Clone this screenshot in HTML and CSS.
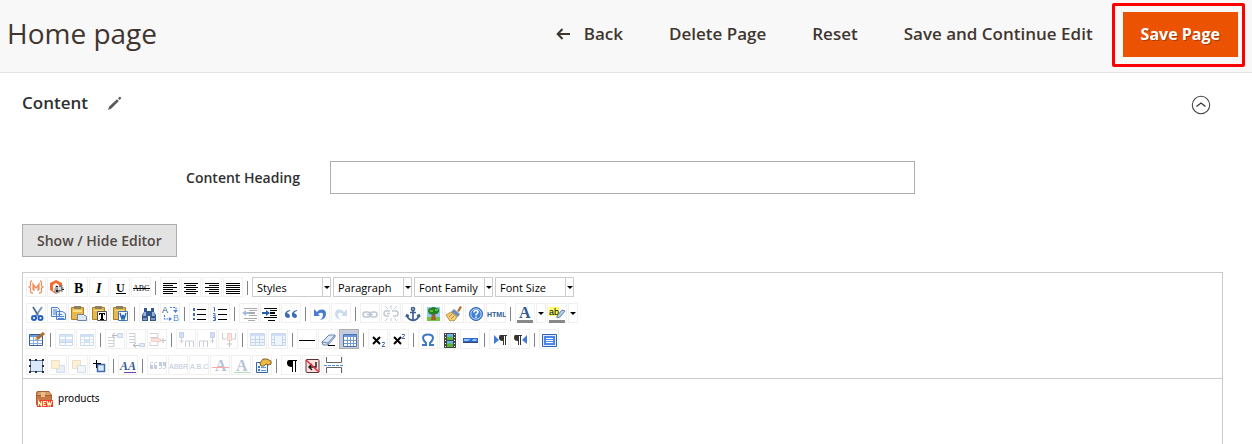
FILE: index.html
```html
<!DOCTYPE html>
<html lang="en">
<head>
<meta charset="utf-8">
<title>Home page</title>
<link rel="stylesheet" href="styles.css">
</head>
<body>
<header class="page-header">
  <h1 class="page-title">Home page</h1>
  <div class="page-actions">
    <button class="action back" type="button"><svg class="back-icon" viewBox="0 0 14 12" aria-hidden="true"><path d="M6.5 1 1.7 6l4.8 5M2 6h12" fill="none" stroke="#41362f" stroke-width="2"/></svg>Back</button>
    <button class="action" type="button">Delete Page</button>
    <button class="action" type="button">Reset</button>
    <button class="action" type="button">Save and Continue Edit</button>
    <div class="highlight"><button class="primary" type="button">Save Page</button></div>
  </div>
</header>
<main class="page-main">
  <div class="section-head">
    <h2 class="section-title">Content</h2>
    <svg class="pencil" viewBox="0 0 14 14" aria-hidden="true"><path d="m0 14 1.200-3.500L9 3.200l1.900 1.900-7.500 7.500zM10 2.300l1.400-1.400c.4-.3.8-.2 1.300.4s.7.900.3 1.300l-1.300 1.400z" fill="#5a5a55"/></svg>
    <button class="collapse" type="button" aria-label="Collapse section"><svg viewBox="0 0 20 20"><circle cx="10" cy="10" r="8.700" fill="none" stroke="#41464c" stroke-width="1.100"/><path d="m5.500 11.500 4.500-3.500 4.500 3.500" fill="none" stroke="#303030" stroke-width="1.200"/></svg></button>
  </div>
  <div class="field">
    <label class="field-label" for="heading">Content Heading</label>
    <input class="field-input" id="heading" type="text">
  </div>
  <button class="toggle-editor" type="button">Show / Hide Editor</button>

  <section class="editor">
    <div class="toolbars">
      <div class="toolbar">
        <button class="tool" aria-label="Insert variable"><svg viewBox="0 0 20 20"><g fill="none" stroke="#ee9260" stroke-width="1.300"><path d="M6 4Q4 4 4.500 7T2.500 10q2.500 0 2 3T7 16M14 4q2 0 1.500 3t2 3q-2.500 0-2 3T13 16M7 13V7l3 4 3-4v6M8 14V9M12 14V9"/></g></svg></button>
        <button class="tool" aria-label="Insert widget"><svg viewBox="0 0 20 20"><path d="m9 3 6 3v7l-6 4-6-4V6z" fill="#f36d32"/><path d="m6 8 3-2 3 2v6H6z" fill="#fff"/><path d="m9 8 4 3-1 5-3 1-2-4z" fill="#aaa"/><path d="m13 7 1 2 2-1-1 2 2 1-2 1 1 3-3-1-1 2-1-3-2-1 3-1z" fill="#777"/><path d="M11 10h3v3h-3z" fill="#ddd"/><path d="M9 9h2v1H9zM9 13h2v2H9zM15 12h2v1h-2z" fill="#222"/></svg></button>
        <button class="tool" aria-label="Bold"><svg viewBox="0 0 20 20"><text x="6" y="16" class="serif bold t14">B</text></svg></button>
        <button class="tool" aria-label="Italic"><svg viewBox="0 0 20 20"><text x="7" y="16" class="serif bold italic t14">I</text></svg></button>
        <button class="tool" aria-label="Underline"><svg viewBox="0 0 20 20"><text x="6" y="15" class="serif bold t12">U</text><path d="M6 16h10v1H6z"/></svg></button>
        <button class="tool" aria-label="Strikethrough"><svg viewBox="0 0 20 20"><text x="2" y="14" class="serif t8">ABC</text><path d="M2 11h17v1H2z"/></svg></button>
        <span class="sep"></span>
        <button class="tool" aria-label="Align left"><svg viewBox="0 0 20 20"><path d="M3 6h14v1H3zM3 8h10v1H3zM3 10h14v1H3zM3 12h10v1H3zM3 14h14v1H3zM3 16h10v1H3z"/></svg></button>
        <button class="tool" aria-label="Align center"><svg viewBox="0 0 20 20"><path d="M3 6h14v1H3zM5 8h10v1H5zM3 10h14v1H3zM5 12h10v1H5zM3 14h14v1H3zM5 16h10v1H5z"/></svg></button>
        <button class="tool" aria-label="Align right"><svg viewBox="0 0 20 20"><path d="M3 6h14v1H3zM7 8h10v1H7zM3 10h14v1H3zM7 12h10v1H7zM3 14h14v1H3zM7 16h10v1H7z"/></svg></button>
        <button class="tool" aria-label="Justify"><svg viewBox="0 0 20 20"><path d="M3 6h14v1H3zM3 8h14v1H3zM3 10h14v1H3zM3 12h14v1H3zM3 14h14v1H3zM3 16h14v1H3z"/></svg></button>
        <span class="sep"></span>
        <div class="lists">
          <span class="list"><select aria-label="Styles"><option>Styles</option></select></span>
          <span class="list"><select aria-label="Format"><option>Paragraph</option></select></span>
          <span class="list"><select aria-label="Font family"><option>Font Family</option></select></span>
          <span class="list"><select aria-label="Font size"><option>Font Size</option></select></span>
        </div>
      </div>

      <div class="toolbar">
        <button class="tool" aria-label="Cut"><svg viewBox="0 0 20 20"><path d="m7 4 6 10M16 4 9 14" fill="none" stroke="#7d97b8" stroke-width="2"/><path d="m7 4 5 8" stroke="#345a8c"/><g fill="none" stroke="#2460bd" stroke-width="2"><circle cx="8" cy="15" r="2"/><circle cx="14.500" cy="15" r="2"/></g></svg></button>
        <button class="tool" aria-label="Copy"><svg viewBox="0 0 20 20"><path d="M4.500 4.500h6l2 2v7h-8zM9.500 8.500h6l3 2v6h-9z" fill="#e6f0ff" stroke="#5080cc"/><path d="M6 7h4M6 9h3M6 11h3M11 11.500h4M11 13.500h6M11 15.500h6" stroke="#4f82d2"/></svg></button>
        <button class="tool" aria-label="Paste"><svg viewBox="0 0 20 20"><path d="M3.500 4.500h12v12h-12z" fill="#e8b84c" stroke="#ad7e28"/><path d="M6 3h7v3H6z" fill="#8a8063"/><path d="M5 7h9v2H5z" fill="#f9df86"/><path d="M9.500 11.500h6l3 2v4h-9z" fill="#dce7f7" stroke="#6d83a5"/></svg></button>
        <button class="tool" aria-label="Paste as text"><svg viewBox="0 0 20 20"><path d="M3.500 4.500h12v12h-12z" fill="#e8b84c" stroke="#ad7e28"/><path d="M6 3h7v3H6z" fill="#8a8063"/><path d="M5 7h9v1H5z" fill="#f9df86"/><path d="M8.500 8.500h9v9h-9z" fill="#fff" stroke="#555"/><path d="M10 10h6v2h-1v-1h-1v5h1v1h-4v-1h1v-5h-1v1h-1z"/></svg></button>
        <button class="tool" aria-label="Paste from Word"><svg viewBox="0 0 20 20"><path d="M3.500 4.500h12v12h-12z" fill="#e8b84c" stroke="#ad7e28"/><path d="M6 3h7v3H6z" fill="#8a8063"/><path d="M5 7h9v1H5z" fill="#f9df86"/><path d="M8.500 8.500h9v9h-9z" fill="#fff" stroke="#4774b7"/><path d="m10 10 2 6 1-4 1 4 2-6" fill="none" stroke="#2468b3" stroke-width="1.500"/></svg></button>
        <span class="sep"></span>
        <button class="tool" aria-label="Find"><svg viewBox="0 0 20 20"><path d="M5 5h3v3h4V5h3v4l2 3v6h-6v-5H9v5H3v-6l2-3z" fill="#34598d"/><path d="M5 9h2v4H4zM13 9h2l1 4h-3z" fill="#91b5df"/><path d="M4 16h4M12 16h4" stroke="#c7dcf4"/></svg></button>
        <button class="tool" aria-label="Find and replace"><svg viewBox="0 0 20 20"><text x="2" y="10" class="sans t9 navy">A</text><text x="13" y="18" class="sans t9 sky">B</text><path d="M10 4.500h6v3M4.500 12v4h6" fill="none" stroke="#4d7ee0" stroke-width="1.200" stroke-dasharray="2 1"/><path d="M13 7h5l-2.500 3zM9 14v4l3-2z" fill="#4d7ee0"/></svg></button>
        <span class="sep"></span>
        <button class="tool" aria-label="Bulleted list"><svg viewBox="0 0 20 20"><path d="M8 6h9v1H8zM8 11h9v1H8zM8 16h9v1H8z"/><path d="M4 5h2v3H4zM4 10h2v3H4zM4 15h2v2H4z" fill="#426bb0"/></svg></button>
        <button class="tool" aria-label="Numbered list"><svg viewBox="0 0 20 20"><path d="M8 6h9v1H8zM8 11h9v1H8zM8 16h9v1H8z"/><path d="M3.500 4.500h1v4M3 10.500h2v1l-1.500 1.500H6M3 14.500h2.500v3H3M4 16h1" fill="none" stroke="#426bb0"/></svg></button>
        <span class="sep"></span>
        <button class="tool" aria-label="Outdent"><svg viewBox="0 0 20 20"><path d="M5 5h13v1H5zM10 7h8v1h-8zM10 9h6v2h-6zM10 12h8v1h-8zM5 15h13v1H5zM9 17h7v1H9z" fill="#aaa"/><path d="m3 10 4-3v2h3v2H7v2z" fill="#a5bddd"/></svg></button>
        <button class="tool" aria-label="Indent"><svg viewBox="0 0 20 20"><path d="M4 5h13v1H4zM10 7h7v1h-7zM10 9h5v2h-5zM10 12h7v1h-7zM4 14h13v1H4zM8 17h7v1H8z"/><path d="m10 10-4-3v2H2v2h4v2z" fill="#225fae"/></svg></button>
        <button class="tool" aria-label="Blockquote"><svg viewBox="0 0 20 20"><path d="M9 7Q3 8 4 13q1 2 3 2t2-2-3-3q0-1 3-2zM16 7q-6 1-5 6 1 2 3 2t2-2-3-3q0-1 3-2z" fill="#3e6cb1"/></svg></button>
        <span class="sep"></span>
        <button class="tool" aria-label="Undo"><svg viewBox="0 0 20 20"><path d="M4 6v7h6L8 11q5-3 5 1 0 3-3 5 6-1 6-6 0-6-7-4L7 9z" fill="#477bd0"/></svg></button>
        <button class="tool" aria-label="Redo"><svg viewBox="0 0 20 20"><path d="M16 6v7h-6l2-2q-5-3-5 1 0 3 3 5-6-1-6-6 0-6 7-4l2 2z" fill="#cddcec"/></svg></button>
        <span class="sep"></span>
        <button class="tool" aria-label="Insert link"><svg viewBox="0 0 20 20"><g fill="none" stroke="#bdc6d3" stroke-width="1.500"><rect x="3" y="9" width="7" height="5" rx="2.500"/><rect x="10" y="9" width="7" height="5" rx="2.500"/><path d="M7 11.500h6"/></g></svg></button>
        <button class="tool" aria-label="Remove link"><svg viewBox="0 0 20 20"><g fill="none" stroke="#c2cad5" stroke-width="1.500"><path d="M9 8H5q-2 0-2 2.500T5 13h3M11 8h4q2 0 2 2.500T15 13h-3M6 10.500h3"/><path d="m4 3 3 3M10 2v4M16 3l-3 3M4 18l3-3M10 18v-3M16 18l-3-3" stroke-width="1"/></g></svg></button>
        <button class="tool" aria-label="Anchor"><svg viewBox="0 0 20 20"><g fill="none" stroke="#3f608b" stroke-width="1.700"><circle cx="11" cy="6" r="1.500"/><path d="M11 8v9M8 9.500h6M5 12q1 5 6 5.500 5-.5 6-5.500M4 14l1-2 2 1M18 14l-1-2-2 1"/></g></svg></button>
        <button class="tool" aria-label="Insert image"><svg viewBox="0 0 20 20"><path d="M4 4h13v14H4z" fill="#8fc9f5"/><path d="M4 14h13v4H4z" fill="#72c342"/><path d="M9 10h3l1 7H8z" fill="#a2602b"/><path d="M5 8q0-3 3-3 3-2 5 0 4 0 3 4-2 3-5 2-5 2-6-3z" fill="#218225"/><path d="M7 7h3v2H7zM12 6h3v2h-3z" fill="#67ba36"/></svg></button>
        <button class="tool" aria-label="Clean up code"><svg viewBox="0 0 20 20"><path d="m13 8 3-5 2 1-3 5z" fill="#b57431"/><path d="m10 6 6 5-2 3-7-5z" fill="#718cb5"/><path d="m7 9 6 5-3 4q-3-1-4 0l-4-6z" fill="#f4cf72" stroke="#b99345"/><path d="m8 11-3 3M10 13l-3 3" stroke="#b88f43"/></svg></button>
        <button class="tool" aria-label="Help"><svg viewBox="0 0 20 20"><circle cx="11" cy="11" r="6.500" fill="#3f7fd6" stroke="#2c66ba"/><circle cx="11" cy="11" r="5.200" fill="none" stroke="#dcecff" stroke-width=".8"/><path d="M9 9.500q0-2 2-2t2 1.500-2 2.500v1M11 13.500V15" fill="none" stroke="#fff" stroke-width="1.500"/></svg></button>
        <button class="tool" aria-label="Edit HTML source"><svg viewBox="0 0 20 20"><text x="1" y="14" class="sans bold t7 navy">HTML</text></svg></button>
        <span class="sep"></span>
        <button class="tool" aria-label="Text color"><svg viewBox="0 0 20 20"><text x="4" y="15" class="serif bold t16 navy">A</text><path d="M2 17h16v3H2z" fill="#888"/></svg></button>
        <button class="drop" aria-label="Choose text color"></button>
        <button class="tool" aria-label="Background color"><svg viewBox="0 0 20 20"><path d="M2 4h10v9H2z" fill="#ff6"/><text x="2" y="12" class="sans t9">ab</text><path d="m10 13 5-6 3 1-5 6-3 1z" fill="#b4cfe9" stroke="#63819e"/><path d="M2 17h16v3H2z" fill="#888"/></svg></button>
        <button class="drop" aria-label="Choose background color"></button>
      </div>

      <div class="toolbar">
        <button class="tool" aria-label="Table properties"><svg viewBox="0 0 20 20"><path d="M3.500 5.500h13v11h-13z" fill="#fff" stroke="#385f91"/><path d="M4 6h12v2H4z" fill="#699de3"/><path d="M4 11.500h12M4 14.500h12M7.500 8v8M11.500 8v8" stroke="#8aaede"/><path d="m9 11 1-3 7-5 2 2-7 6z" fill="#a96d36"/><path d="m9 11 1-3 2 2z" fill="#e7c894"/></svg></button>
        <span class="sep"></span>
        <button class="tool faded" aria-label="Row properties"><svg viewBox="0 0 20 20"><path d="M4.500 5.500h13v11h-13z" fill="#fff" stroke="#6f96cc"/><path d="M5 6h12v2H5zM5 10h12v3H5z" fill="#8fb6ed"/><path d="M10.500 6v10M5 13.500h12" stroke="#628dc9"/></svg></button>
        <button class="tool faded" aria-label="Cell properties"><svg viewBox="0 0 20 20"><path d="M4.500 5.500h13v11h-13z" fill="#fff" stroke="#6f96cc"/><path d="M5 6h12v2H5zM9 10h5v3H9z" fill="#7ca9e9"/><path d="M8.500 8v8M13.500 8v8M5 10.500h12M5 13.500h12" stroke="#8eb0df"/></svg></button>
        <span class="sep"></span>
        <button class="tool faded" aria-label="Insert row before"><svg viewBox="0 0 20 20"><path d="M3 8.500h6v9H3M3 11.500h6M3 14.500h6" fill="none" stroke="#747c8c"/><path d="M12.500 4.500h5v4h-5z" fill="#a8c9f6" stroke="#648dcd"/><path d="M12 6.500H8M10 4 7 6.500 10 9" fill="none" stroke="#333"/></svg></button>
        <button class="tool faded" aria-label="Insert row after"><svg viewBox="0 0 20 20"><path d="M3 4.500h6v9H3M3 7.500h6M3 10.500h6" fill="none" stroke="#747c8c"/><path d="M13.500 14.500h5v3h-5z" fill="#a8c9f6" stroke="#648dcd"/><path d="M13 16.500H8M10 14l-3 2.500 3 2" fill="none" stroke="#333"/></svg></button>
        <button class="tool faded" aria-label="Delete row"><svg viewBox="0 0 20 20"><path d="M3 4.500h8v4H3M3 13v3.500h8V13" fill="none" stroke="#747c8c"/><path d="M4.500 9.500h9v3h-9z" fill="#f9aaa0" stroke="#df7167"/><path d="M14 11.500h5M16 9v5" stroke="#555"/></svg></button>
        <span class="sep"></span>
        <button class="tool faded" aria-label="Insert column before"><svg viewBox="0 0 20 20"><path d="M3.500 3.500h4v5h-4z" fill="#78a7ec" stroke="#557fba"/><path d="M5.500 9v5M3.500 12h4M9.500 18v-6h8v6M13.500 12v6" fill="none" stroke="#66758d"/></svg></button>
        <button class="tool faded" aria-label="Insert column after"><svg viewBox="0 0 20 20"><path d="M13.500 3.500h4v5h-4z" fill="#78a7ec" stroke="#557fba"/><path d="M15.500 9v5M13.500 12h4M2.500 18v-6h8v6M6.500 12v6" fill="none" stroke="#66758d"/></svg></button>
        <button class="tool faded" aria-label="Delete column"><svg viewBox="0 0 20 20"><path d="M4.500 4v6h4M17.500 4v6h-4" fill="none" stroke="#66758d"/><path d="M9.500 4.500h4v7h-4z" fill="#f9aaa0" stroke="#df7167"/><path d="M11.500 12v6M9 15h5" stroke="#555"/></svg></button>
        <span class="sep"></span>
        <button class="tool faded" aria-label="Split cells"><svg viewBox="0 0 20 20"><path d="M3.500 4.500h14v12h-14z" fill="#d4e3f7" stroke="#6d92c5"/><path d="M4 5h13v2H4z" fill="#79a6e7"/><path d="M4 10.500h13M4 13.500h13M8.500 7v9M12.500 7v9" stroke="#648dc6"/></svg></button>
        <button class="tool faded" aria-label="Merge cells"><svg viewBox="0 0 20 20"><path d="M3.500 4.500h14v12h-14z" fill="#d4e3f7" stroke="#6d92c5"/><path d="M4 5h13v2H4z" fill="#79a6e7"/><path d="M6.500 7v9M14.500 7v9M4 10.500h2M15 10.500h2M4 13.500h2M15 13.500h2" stroke="#648dc6"/></svg></button>
        <span class="sep"></span>
        <button class="tool" aria-label="Horizontal rule"><svg viewBox="0 0 20 20"><path d="M2 11h16v1H2z"/></svg></button>
        <button class="tool" aria-label="Remove formatting"><svg viewBox="0 0 20 20"><path d="m4 13 7-7h6v2l-7 8H5z" fill="#dce8fa" stroke="#6b86ad"/><path d="m4 13 6 1 7-8M10 14v2" fill="none" stroke="#6b86ad"/><path d="M10 16h7v1h-7z"/></svg></button>
        <button class="tool pressed" aria-label="Toggle guidelines"><svg viewBox="0 0 20 20"><path d="M4.500 5.500h13v12h-13z" fill="#fff" stroke="#4d73aa"/><path d="M5 6h12v2H5z" fill="#6796dc"/><path d="M5 11.500h12M5 14.500h12M8.500 8v9M11.500 8v9M14.500 8v9" stroke="#7599c8"/></svg></button>
        <span class="sep"></span>
        <button class="tool" aria-label="Subscript"><svg viewBox="0 0 20 20"><path d="m5 8 7 7M12 8l-7 7" stroke="#000" stroke-width="2"/><path d="M14 13.500h2.500v1L14 17.500h3" fill="none" stroke="#3a6eb5"/></svg></button>
        <button class="tool" aria-label="Superscript"><svg viewBox="0 0 20 20"><path d="m5 8 7 7M12 8l-7 7" stroke="#000" stroke-width="2"/><path d="M13 5.500h2.500v1L13 9.500h3" fill="none" stroke="#3a6eb5"/></svg></button>
        <span class="sep"></span>
        <button class="tool" aria-label="Special character"><svg viewBox="0 0 20 20"><path d="M4 16h4v-2Q5 11 5 9q0-3.500 5-3.500T15 9q0 2-3 5v2h4" fill="none" stroke="#3e78c6" stroke-width="2"/></svg></button>
        <button class="tool" aria-label="Insert media"><svg viewBox="0 0 20 20"><path d="M5 4h12v15H5z" fill="#444"/><path d="M8 5h6v6H8zM8 12h6v6H8z" fill="#62b8ed"/><path d="M8 8h3l1-1 2 2v2H8zM8 15l3-1 3 1v3H8z" fill="#59b52d"/><path d="M6.500 5v13M15.500 5v13" stroke="#fff" stroke-dasharray="1 2"/></svg></button>
        <button class="tool" aria-label="Advanced rule"><svg viewBox="0 0 20 20"><path d="M3 9h15v4H3z" fill="#3268c5"/><path d="M4 10h7l-3 2H4zM13 10h4l-1 2h-4z" fill="#8bc1ff"/><path d="M3 13h15v1H3z" fill="#304776"/></svg></button>
        <span class="sep"></span>
        <button class="tool" aria-label="Left to right"><svg viewBox="0 0 20 20"><path d="m5 6 5 5-5 4z" fill="#407cd1"/><path d="M11 6h7v1h-1v9h-1V7h-1v9h-1v-4q-4 0-4-3 0-3 1-3z" fill="#333"/></svg></button>
        <button class="tool" aria-label="Right to left"><svg viewBox="0 0 20 20"><path d="m17 6-5 5 5 4z" fill="#407cd1"/><path d="M5 6h7v1h-1v9h-1V7H9v9H8v-4Q4 12 4 9q0-3 1-3z" fill="#333"/></svg></button>
        <span class="sep"></span>
        <button class="tool" aria-label="Full screen"><svg viewBox="0 0 20 20"><path d="M3.500 5.500h14v12h-14z" fill="#dfebff" stroke="#2f65ac"/><path d="M5 7h11v9H5z" fill="#4b86e8"/><path d="M7 9.500h7M7 11.500h7M7 13.500h7" stroke="#fff"/></svg></button>
      </div>

      <div class="toolbar">
        <button class="tool" aria-label="Insert layer"><svg viewBox="0 0 20 20"><path d="M4.500 5.500h12v11h-12z" fill="#dce9fd" stroke="#61789a"/><path d="M3 4h2v2H3zM9 4h2v2H9zM16 4h2v2h-2zM3 10h2v2H3zM16 10h2v2h-2zM3 16h2v2H3zM9 16h2v2H9zM16 16h2v2h-2z" fill="#222d40"/></svg></button>
        <button class="tool faded" aria-label="Move forward"><svg viewBox="0 0 20 20"><path d="M9.500 10.500h8v7h-8z" fill="#c3d4ec" stroke="#829cc2"/><path d="M4.500 5.500h8v8h-8z" fill="#ffd587" stroke="#c7a768"/></svg></button>
        <button class="tool faded" aria-label="Move backward"><svg viewBox="0 0 20 20"><path d="M4.500 5.500h8v8h-8z" fill="#ffd587" stroke="#c7a768"/><path d="M9.500 10.500h8v7h-8z" fill="#dce5f1" stroke="#829cc2"/></svg></button>
        <button class="tool" aria-label="Toggle absolute positioning"><svg viewBox="0 0 20 20"><path d="M8.500 9.500h7v7h-7z" fill="#d9e9ff" stroke="#386bb0" stroke-width="1.500"/><path d="M4 8h8v1H4zM7 5h1v8H7z"/></svg></button>
        <span class="sep"></span>
        <button class="tool" aria-label="Edit CSS style"><svg viewBox="0 0 20 20"><text x="2" y="15" class="serif bold italic t12 navy">AA</text><path d="M6 17h12v1H6z" fill="#7040bd"/></svg></button>
        <span class="sep"></span>
        <button class="tool faded" aria-label="Citation"><svg viewBox="0 0 20 20"><g fill="#587297"><path d="M5 7h1v1H4v2h2v4H3V9q0-2 2-2zM9 7h1v1H8v2h2v4H7V9q0-2 2-2zM12 7h3v5q0 2-2 2h-1v-1h2v-2h-2zM16 7h3v5q0 2-2 2h-1v-1h2v-2h-2z"/></g></svg></button>
        <button class="tool faded" aria-label="Abbreviation"><svg viewBox="0 0 20 20"><text x="1" y="14" class="sans t7 navy">ABBR</text></svg></button>
        <button class="tool faded" aria-label="Acronym"><svg viewBox="0 0 20 20"><text x="1" y="14" class="sans t7 navy">A.B.C.</text></svg></button>
        <button class="tool faded" aria-label="Deletion"><svg viewBox="0 0 20 20"><text x="5" y="16" class="serif bold t16 navy">A</text><path d="M2 12h17v1H2z" fill="red"/></svg></button>
        <button class="tool faded" aria-label="Insertion"><svg viewBox="0 0 20 20"><text x="5" y="16" class="serif bold t16 navy">A</text><path d="M3 17h16v1H3z" fill="#16a32b"/></svg></button>
        <button class="tool" aria-label="Attributes"><svg viewBox="0 0 20 20"><path d="M4.500 7.500h11v10h-11z" fill="#edf4ff" stroke="#3b659d"/><path d="M6 11h2v2H6zM6 14h2v2H6z" fill="#397bd1"/><path d="M9 12.500h5M9 15.500h5" stroke="#6799d8"/><path d="m8 8 3-4h4l4 2v3l-2 1-3-1-2 2H9z" fill="#edb942" stroke="#806029"/></svg></button>
        <span class="sep"></span>
        <button class="tool" aria-label="Visual characters"><svg viewBox="0 0 20 20"><path d="M8 5h8v1h-1v11h-1V6h-2v11h-1v-5q-5 0-5-4 0-3 2-3z"/></svg></button>
        <button class="tool" aria-label="Non-breaking space"><svg viewBox="0 0 20 20"><rect x="4" y="4.500" width="13" height="13" rx="1" fill="#ffe0df" stroke="#5c3437"/><path d="M14 7v5H8M10 9l-3 3 3 3" fill="none" stroke="#222" stroke-width="1.500"/><path d="m4 5 13 12" stroke="#e52b35" stroke-width="1.500"/></svg></button>
        <button class="tool" aria-label="Page break"><svg viewBox="0 0 20 20"><path d="M3.500 2v5.500h15V2M3.500 18v-5.500h15V18" fill="none" stroke="#666"/><path d="M1 10.500h19" stroke="#4e8ed4" stroke-dasharray="3 1"/></svg></button>
      </div>
    </div>
    <div class="document" contenteditable="true" role="textbox" aria-label="Page content">
      <svg class="widget-icon" viewBox="0 0 20 20" aria-hidden="true"><path d="M4 2h11l3 4v9q0 2-2 2H4q-2 0-2-2V5q0-3 2-3z" fill="#a96032"/><path d="M4 3h11l2 3H3z" fill="#d89d65"/><path d="M3 7h14v5H3z" fill="#c87843"/><path d="M7 3h4v5H7z" fill="#e9bd8a"/><path d="M3 11h16v7H3z" fill="#f2382d"/><path d="M4.500 17v-5l3 5v-5M12 12.500H9.500v4H12M9.500 14.500h2M13 12l1.200 4.500 1-3 1 3L18 12" fill="none" stroke="#fffbc0" stroke-width="1.200"/></svg>
      <span>products</span>
    </div>
  </section>
</main>
</body>
</html>
```

FILE: styles.css
```css
* { box-sizing: border-box; }

body {
  margin: 0;
  min-height: 100vh;
  display: flex;
  flex-direction: column;
  background: #fff;
  color: #303030;
  font-family: "Open Sans", "Noto Sans", sans-serif;
  font-size: 14px;
}

button, input, select { font: inherit; color: inherit; margin: 0; }
button { border: 0; padding: 0; background: none; cursor: pointer; }

.page-header {
  display: flex;
  align-items: center;
  justify-content: space-between;
  min-height: 73px;
  padding: 0 14px 4px 7px;
  background: #f8f8f8;
  border-bottom: 1px solid #e3e3e3;
  color: #41362f;
}

.page-title { margin: 0; padding-bottom: 2px; font-size: 28px; font-weight: 400; line-height: 40px; }

.page-actions { display: flex; align-items: center; gap: 46px; }
.action { font-size: 17px; font-weight: 600; line-height: 24px; }
.back { display: flex; align-items: center; gap: 14px; }
.back-icon { width: 14px; height: 12px; }

.highlight { position: relative; margin-left: -16px; }
.highlight::after {
  content: "";
  position: absolute;
  inset: -9px -7px -10px -11px;
  border: 3px solid #f00;
  border-radius: 2px;
  pointer-events: none;
}
.primary {
  display: block;
  padding: 10px 18px 11px;
  background: #eb5202;
  color: #fff;
  font-size: 16px;
  font-weight: 700;
  line-height: 24px;
  text-shadow: 1px 1px 0 rgba(0, 0, 0, .3);
}

.page-main {
  flex: 1;
  display: flex;
  flex-direction: column;
  align-items: flex-start;
  padding: 17px 29px 0 22px;
}

.section-head { display: flex; align-items: center; align-self: stretch; }
.section-title { margin: 0; font-size: 17px; font-weight: 600; line-height: 24px; }
.pencil { width: 14px; height: 14px; margin-left: 20px; }
.collapse { width: 20px; height: 20px; margin: 5px 12px 0 auto; }
.collapse svg { display: block; }

.field {
  display: grid;
  grid-template-columns: 278fr 585fr 278fr;
  column-gap: 30px;
  align-items: center;
  align-self: stretch;
  margin-top: 46px;
}
.field-label { text-align: right; font-weight: 600; }
.field-input {
  width: 100%;
  height: 33px;
  padding: 0 10px;
  border: 1px solid #adadad;
  background: #fff;
}

.toggle-editor {
  margin-top: 30px;
  height: 33px;
  padding: 0 14px;
  border: 1px solid #adadad;
  background: #e3e3e3;
  color: #514943;
  font-weight: 600;
}

.editor {
  flex: 1;
  align-self: stretch;
  display: flex;
  flex-direction: column;
  margin-top: 15px;
  border: 1px solid #ccc;
  border-bottom: 0;
}

.toolbars {
  display: flex;
  flex-direction: column;
  gap: 6px;
  padding: 4px 3px 3px;
  border-bottom: 1px solid #ccc;
}
.toolbar { display: flex; gap: 1px; }

.tool { width: 20px; height: 20px; box-shadow: inset 0 0 0 1px #f0f0ee; }
.tool svg { display: block; width: 20px; height: 20px; }
.faded svg { opacity: .35; }
.pressed { background: #c2cbe0; box-shadow: inset 0 0 0 1px #b5ada4; }

.drop { width: 10px; height: 20px; box-shadow: inset 0 0 0 1px #f0f0ee; }
.drop::after {
  content: "";
  display: block;
  width: 0;
  margin: 1px auto 0;
  border: 3px solid transparent;
  border-top-color: #000;
  border-bottom: 0;
}

.sep { width: 1px; height: 14px; margin: 4px 3px 2px; background: #80828a; }

.serif { font-family: "Liberation Serif", serif; }
.sans { font-family: "Liberation Sans", sans-serif; }
.bold { font-weight: 700; }
.italic { font-style: italic; }
.t7 { font-size: 7px; }
.t8 { font-size: 8px; }
.t9 { font-size: 9px; }
.t12 { font-size: 12px; }
.t14 { font-size: 14px; }
.t16 { font-size: 16px; }
.navy { fill: #315a92; }
.sky { fill: #5d91e8; }

.lists { display: flex; gap: 2px; }
.list { position: relative; width: 79px; height: 20px; }
.list select {
  display: block;
  width: 100%;
  height: 20px;
  padding: 0 12px 0 4px;
  border: 1px solid #ccc;
  border-radius: 0;
  background: #fff;
  appearance: none;
  color: #000;
  font-size: 11px;
}
.list::before {
  content: "";
  position: absolute;
  top: 0;
  right: 8px;
  width: 1px;
  height: 100%;
  background: #ccc;
}
.list::after {
  content: "";
  position: absolute;
  top: 9px;
  right: 1px;
  border: 3px solid transparent;
  border-top-color: #000;
  border-bottom: 0;
  pointer-events: none;
}

.document {
  flex: 1;
  display: flex;
  align-items: flex-start;
  gap: 4px;
  padding: 10px 11px;
  color: #000;
  font-family: "Noto Sans", sans-serif;
  font-size: 10px;
  line-height: 18px;
}
.widget-icon { width: 20px; height: 20px; }
```
